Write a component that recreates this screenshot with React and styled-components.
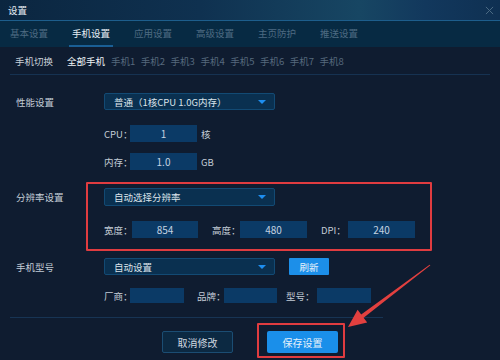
import React from "react";
import styled, { createGlobalStyle, css } from "styled-components";

const GlobalStyle = createGlobalStyle`
  body {
    margin: 0;
    background: #0f1c30;
    font-family: "Noto Sans CJK SC", "Noto Sans", sans-serif;
  }
`;

const Window = styled.div`
  position: relative;
  width: 500px;
  height: 360px;
  overflow: hidden;
  background: #0f1c30;
  font-size: 9.5px;
  color: #c3ccd6;
`;

const TitleBar = styled.div`
  height: 20px;
  display: flex;
  align-items: center;
  justify-content: space-between;
  padding: 0 6px 0 8px;
  background: linear-gradient(90deg, #0b2640 0%, #0f3150 40%, #174663 72%, #12385d 85%, #0f3052 100%);
  border-bottom: 1px solid #1d5e8c;
  color: #e6edf3;
`;

const Close = styled.svg`
  width: 9px;
  height: 9px;
`;

const TabBar = styled.div`
  height: 26px;
  display: flex;
  align-items: stretch;
  gap: 18px;
  padding-left: 7px;
  background: #072a43;
`;

const Tab = styled.div`
  display: flex;
  align-items: center;
  padding: 0 3px;
  color: #4e6b82;
  border-bottom: 2px solid transparent;
  ${(p) =>
    p.$active &&
    css`
      color: #e8eef4;
      border-bottom-color: #1a5f95;
    `}
`;

const SubBar = styled.div`
  height: 27px;
  margin: 0 10px;
  padding-left: 5px;
  display: flex;
  align-items: center;
  border-bottom: 1px solid #163251;
`;

const SubLabel = styled.span`
  color: #c8d0d8;
  margin-right: 14px;
`;

const Phone = styled.span`
  color: ${(p) => (p.$active ? "#eef3f7" : "#56697d")};
  margin-right: ${(p) => (p.$active ? "6px" : "5.5px")};
`;

const Form = styled.div`
  padding: 18px 0 0 16px;
`;

const Row = styled.div`
  display: flex;
  align-items: ${(p) => (p.$top ? "flex-start" : "center")};
  margin-top: ${(p) => p.$mt || 0}px;
`;

const RowLabel = styled.div`
  width: 88px;
  color: #c3ccd6;
  ${(p) =>
    p.$top &&
    css`
      line-height: 18px;
    `}
`;

const Indent = styled.div`
  padding-left: 88px;
  display: flex;
  align-items: center;
  margin-top: ${(p) => p.$mt || 0}px;
`;

const Select = styled.div`
  width: 171px;
  height: ${(p) => p.$h || 16}px;
  display: flex;
  align-items: center;
  justify-content: space-between;
  padding: 0 8px 0 9px;
  box-sizing: border-box;
  background: #0a3050;
  border: 1px solid #124a74;
  border-radius: 2px;
  color: #dbe3ea;
`;

const Caret = styled.span`
  width: 0;
  height: 0;
  border-left: 4px solid transparent;
  border-right: 4px solid transparent;
  border-top: 4px solid #1e8ef0;
`;

const FieldLabel = styled.span`
  width: ${(p) => p.$w}px;
  margin-left: ${(p) => p.$ml || 0}px;
  color: #c3ccd6;
  white-space: nowrap;
`;

const Input = styled.div`
  width: ${(p) => p.$w}px;
  height: ${(p) => p.$h || 17}px;
  display: flex;
  align-items: center;
  justify-content: center;
  background: #0b3a66;
  color: #c4d2e0;
  font-size: 10px;
`;

const Unit = styled.span`
  margin-left: 4px;
  color: #c3ccd6;
`;

const Highlight = styled.div`
  position: relative;
  &::before {
    content: "";
    position: absolute;
    inset: -6px -17px -13px -18px;
    border: 2px solid #e03c40;
    border-radius: 1px;
    pointer-events: none;
  }
`;

const FieldRow = styled.div`
  display: flex;
  align-items: center;
  margin-top: ${(p) => p.$mt || 0}px;
`;

const SmallButton = styled.div`
  margin-left: 14px;
  width: 40px;
  height: 17px;
  display: flex;
  align-items: center;
  justify-content: center;
  background: #1c8fe9;
  border-radius: 1px;
  color: #e8f2fb;
`;

const Divider = styled.div`
  margin: 14px 0 0 10px;
  width: 373px;
  height: 1px;
  background: #173454;
`;

const Footer = styled.div`
  display: flex;
  gap: 34px;
  padding-left: 162px;
  margin-top: 13px;
`;

const Button = styled.div`
  position: relative;
  width: 71px;
  height: 22px;
  box-sizing: border-box;
  display: flex;
  align-items: center;
  justify-content: center;
  border-radius: 2px;
  font-size: 10px;
  ${(p) =>
    p.$primary
      ? css`
          background: #1a8fea;
          color: #e6f1fb;
        `
      : css`
          background: #0c2942;
          border: 1px solid #1b4d73;
          color: #d0d8e0;
        `}
`;

const Mark = styled.span`
  position: absolute;
  inset: -8px -7px -5px -10px;
  border: 2px solid #e03c40;
  border-radius: 1px;
`;

const Arrow = styled.svg`
  position: absolute;
  left: 0;
  top: 0;
  width: 500px;
  height: 360px;
  pointer-events: none;
`;

export default function App() {
  const tabs = ["基本设置", "手机设置", "应用设置", "高级设置", "主页防护", "推送设置"];
  const phones = ["手机1", "手机2", "手机3", "手机4", "手机5", "手机6", "手机7", "手机8"];

  return (
    <>
      <GlobalStyle />
      <Window>
        <TitleBar>
          <span>设置</span>
          <Close viewBox="0 0 10 10">
            <path d="M1 1L9 9M9 1L1 9" stroke="#4c6b84" strokeWidth="1.1" />
          </Close>
        </TitleBar>
        <TabBar>
          {tabs.map((t) => (
            <Tab key={t} $active={t === "手机设置"}>
              {t}
            </Tab>
          ))}
        </TabBar>
        <SubBar>
          <SubLabel>手机切换</SubLabel>
          <Phone $active>全部手机</Phone>
          {phones.map((p) => (
            <Phone key={p}>{p}</Phone>
          ))}
        </SubBar>

        <Form>
          <Row>
            <RowLabel>性能设置</RowLabel>
            <Select $h={17}>
              <span>普通（1核CPU 1.0G内存）</span>
              <Caret />
            </Select>
          </Row>
          <Indent $mt={15}>
            <FieldLabel $w={26}>CPU：</FieldLabel>
            <Input $w={67}>1</Input>
            <Unit>核</Unit>
          </Indent>
          <Indent $mt={11}>
            <FieldLabel $w={26}>内存：</FieldLabel>
            <Input $w={67}>1.0</Input>
            <Unit>GB</Unit>
          </Indent>

          <Row $top $mt={18}>
            <RowLabel $top>分辨率设置</RowLabel>
            <Highlight>
              <Select $h={18}>
                <span>自动选择分辨率</span>
                <Caret />
              </Select>
              <FieldRow $mt={15}>
                <FieldLabel $w={28}>宽度：</FieldLabel>
                <Input $w={66}>854</Input>
                <FieldLabel $w={28} $ml={14}>高度：</FieldLabel>
                <Input $w={67}>480</Input>
                <FieldLabel $w={27} $ml={14}>DPI：</FieldLabel>
                <Input $w={67}>240</Input>
              </FieldRow>
            </Highlight>
          </Row>

          <Row $mt={20}>
            <RowLabel>手机型号</RowLabel>
            <Select $h={17}>
              <span>自动设置</span>
              <Caret />
            </Select>
            <SmallButton>刷新</SmallButton>
          </Row>
          <Indent $mt={13}>
            <FieldLabel $w={26}>厂商：</FieldLabel>
            <Input $w={54} $h={15} />
            <FieldLabel $w={27} $ml={13}>品牌：</FieldLabel>
            <Input $w={53} $h={15} />
            <FieldLabel $w={31} $ml={9}>型号：</FieldLabel>
            <Input $w={54} $h={15} />
          </Indent>
        </Form>

        <Divider />

        <Footer>
          <Button>取消修改</Button>
          <Button $primary>
            保存设置
            <Mark />
          </Button>
        </Footer>

        <Arrow viewBox="0 0 500 360">
          <polygon
            points="430.4,265.3 429.6,264.7 361.2,314.5 357.6,309.7 348,327 367.2,322.5 363.6,317.7"
            fill="#e2403f"
          />
        </Arrow>
      </Window>
    </>
  );
}
